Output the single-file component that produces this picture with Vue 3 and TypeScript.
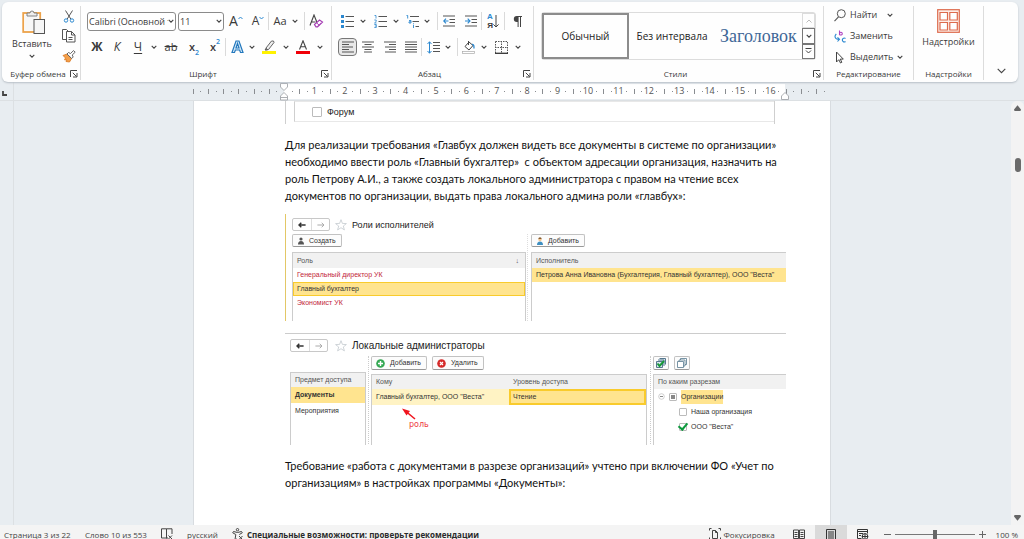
<script setup lang="ts">
import { h, ref } from 'vue'

const Chevron = () =>
  h('svg', { width: 6, height: 6, viewBox: '0 0 6 6', 'aria-hidden': 'true' }, [
    h('path', { d: 'M.7 1.8 3 4.1 5.3 1.8', fill: 'none', stroke: '#444', 'stroke-width': 1.1 }),
  ])

const Launcher = () =>
  h('svg', { width: 8, height: 8, viewBox: '0 0 8 8', 'aria-hidden': 'true' }, [
    h('path', { d: 'M.5 7V.5H7M2.8 2.8 6.5 6.5M7 3v4H3', fill: 'none', stroke: '#444', 'stroke-width': 1 }),
  ])

const Star = () =>
  h('svg', { width: 12, height: 12, viewBox: '0 0 12 12', 'aria-hidden': 'true' }, [
    h('path', {
      d: 'M6 .7 7.4 4.4 11.4 4.6 8.3 7 9.4 10.9 6 8.7 2.6 10.9 3.7 7 .6 4.6 4.6 4.4Z',
      fill: '#fff', stroke: '#bcc3c8', 'stroke-width': 0.7,
    }),
  ])

const Arrow = (props: { back?: boolean }) =>
  h('svg', { width: 8, height: 6, viewBox: '0 0 8 6', 'aria-hidden': 'true' }, [
    h('path', {
      d: props.back ? 'M3.3.8 1 3l2.3 2.2M1 3h6.6' : 'M4.7.8 7 3 4.7 5.2M7 3H.4',
      fill: 'none', stroke: props.back ? '#333' : '#aaa', 'stroke-width': props.back ? 1.5 : 1,
    }),
  ])
Arrow.props = { back: Boolean }

const unit = 30.4
const origin = 91
const numbers = Array.from({ length: 16 }, (_, i) => ({ n: i + 1, x: origin + unit * (i + 1) }))
const halves: number[] = []
const dots: number[] = []
for (let q = -12; q <= 79; q++) {
  const x = Math.round(origin + (unit * q) / 4)
  if (q === 0 || x < 0 || q > 71) continue
  if (q % 2 !== 0) dots.push(x)
  else if (q % 4 !== 0 || q < 0 || q > 64) halves.push(x)
}

const intro = [
  'Для реализации требования «Главбух должен видеть все документы в системе по организации»',
  'необходимо ввести роль «Главный бухгалтер»  с объектом адресации организация, назначить на',
  'роль Петрову А.И., а также создать локального администратора с правом на чтение всех',
  'документов по организации, выдать права локального админа роли «главбух»:',
]
const outro = [
  'Требование «работа с документами в разрезе организаций» учтено при включении ФО «Учет по',
  'организациям» в настройках программы «Документы»:',
]
const roles = ['Генеральный директор УК', 'Главный бухгалтер', 'Экономист УК']
const zoom = ref(50)
</script>

<template>
  <div class="app">
    <header class="ribbon">
      <section class="group clip">
        <div class="body">
          <button class="paste">
            <svg width="24" height="26" viewBox="0 0 24 26">
              <rect x="1.2" y="4" width="17" height="19" fill="#fff" stroke="#eca24a" stroke-width="1.8" />
              <rect x="3" y="5.5" width="13.5" height="16" fill="#f7f7f7" />
              <path d="M5 7V4h3a2 2 0 0 1 4 0h3v3Z" fill="#eee" stroke="#777" stroke-width=".9" />
              <rect x="12" y="10.5" width="10.5" height="14" fill="#f6f6f6" stroke="#555" />
            </svg>
            <span>Вставить</span>
            <Chevron />
          </button>
          <div class="side">
            <button aria-label="Вырезать">
              <svg width="12" height="13" viewBox="0 0 12 13" fill="none">
                <path d="M2.5.5 7.8 9M9.5.5 4.2 9" stroke="#555" />
                <circle cx="3" cy="10.5" r="1.7" stroke="#2b88d0" /><circle cx="9" cy="10.5" r="1.7" stroke="#2b88d0" />
              </svg>
            </button>
            <button aria-label="Копировать">
              <svg width="14" height="14" viewBox="0 0 14 14" fill="#fff" stroke="#555">
                <path d="M4.5 10.5H.5V.5h4l2 2" /><path d="M4.5 2.5h5L13 6v7H4.5ZM9.5 2.5V6H13M6.5 8.5h4M6.5 10.5h4" />
              </svg>
            </button>
            <button aria-label="Формат по образцу">
              <svg width="14" height="13" viewBox="0 0 14 13">
                <path d="M1 5.5 5 4l4.5 4.5L7.5 12 4 11.5 5 10 2.5 9.8 3.5 8Z" fill="#f4a04b" stroke="#d9751c" stroke-width=".8" />
                <path d="m5 4 1.5-1.5 2 1L11.5.6l1.7 1.6L10.2 5l1 2-1.5 1.5Z" fill="#fff" stroke="#555" stroke-width=".9" />
              </svg>
            </button>
          </div>
        </div>
        <footer><span>Буфер обмена</span><button aria-label="Параметры буфера обмена"><Launcher /></button></footer>
      </section>

      <section class="group font">
        <div class="body rows">
          <div class="row">
            <label class="combo name">
              <select aria-label="Шрифт"><option>Calibri (Основной текст)</option></select><Chevron />
            </label>
            <label class="combo size">
              <select aria-label="Размер шрифта"><option>11</option></select><Chevron />
            </label>
            <button class="w24 big" aria-label="Увеличить размер">A<svg width="5" height="10" viewBox="0 0 5 10"><path d="M.5 3 2.5 1l2 2" fill="none" stroke="#2b88d0" /></svg></button>
            <button class="w20 mid" aria-label="Уменьшить размер">A<svg width="5" height="10" viewBox="0 0 5 10"><path d="M.5 1l2 2 2-2" fill="none" stroke="#2b88d0" /></svg></button>
            <i class="sep"></i>
            <button class="w22">Aa</button>
            <button class="w8" aria-label="Варианты регистра"><Chevron /></button>
            <i class="sep gap-before"></i>
            <button class="w22" aria-label="Удалить форматирование">
              <svg width="15" height="14" viewBox="0 0 15 14" fill="none">
                <path d="M1 11.5 5 1l3 7.5M2.5 8h4" stroke="#444" stroke-width="1.1" />
                <path d="m5.5 10.5 5-4.5 3 2-5 4.8H7Z" fill="#fff" stroke="#a63fb5" stroke-width="1.2" /><path d="m7.5 8.8 2.8 2.5" stroke="#a63fb5" />
              </svg>
            </button>
          </div>
          <div class="row">
            <button class="w20 heavy">Ж</button>
            <button class="w20 italic">К</button>
            <button class="w22 under">Ч</button>
            <button class="w10" aria-label="Варианты подчёркивания"><Chevron /></button>
            <button class="w24 strike">ab</button>
            <button class="w22 script">x<sub>2</sub></button>
            <button class="w20 script">x<sup>2</sup></button>
            <i class="sep"></i>
            <button class="w22" aria-label="Текстовые эффекты">
              <svg width="13" height="14" viewBox="0 0 13 14"><path d="M1 12.5 5 1h3l4 11.5H9.5L8.6 10H4.4l-.9 2.5ZM5 8h3L6.5 3.5Z" fill="#d8ebf9" stroke="#2378bd" stroke-width="1.2" /></svg>
            </button>
            <button class="w8" aria-label="Варианты эффектов"><Chevron /></button>
            <button class="w26" aria-label="Цвет выделения">
              <svg width="14" height="14" viewBox="0 0 14 14"><path d="m4 8 5.5-7h2l.5 1.5-5.5 7H4.5Z" fill="#eee" stroke="#555" stroke-width=".9" /><path d="M4.5 8 3 10h2.5" stroke="#555" fill="none" /><rect x="0" y="11" width="14" height="3" fill="#fff200" /></svg>
            </button>
            <button class="w8" aria-label="Варианты выделения"><Chevron /></button>
            <button class="w26" aria-label="Цвет текста">
              <svg width="14" height="14" viewBox="0 0 14 14"><path d="M3.5 9.5 7 .8l3.5 8.7M4.7 6.7h4.6" fill="none" stroke="#444" stroke-width="1.1" /><rect x="0" y="11" width="14" height="3" fill="#f00008" /></svg>
            </button>
            <button class="w8" aria-label="Варианты цвета"><Chevron /></button>
          </div>
        </div>
        <footer><span>Шрифт</span><button aria-label="Параметры шрифта"><Launcher /></button></footer>
      </section>

      <section class="group para">
        <div class="body rows">
          <div class="row">
            <button class="w18" aria-label="Маркеры">
              <svg width="13" height="13" viewBox="0 0 13 13"><path d="M4.5 1.5H13M4.5 6.5H13M4.5 11.5H13" stroke="#555" /><path d="M0 0h3v3H0ZM0 5h3v3H0ZM0 10h3v3H0Z" fill="#2b88d0" /></svg>
            </button>
            <button class="w14" aria-label="Варианты маркеров"><Chevron /></button>
            <button class="w20" aria-label="Нумерация">
              <svg width="13" height="13" viewBox="0 0 13 13" fill="none"><path d="M4.5 1.5H13M4.5 6.5H13M4.5 11.5H13" stroke="#555" /><path d="M.5.5H2v3M.3 5h1.9v1.5L.5 8h2M.3 9.5h2v3h-2M.8 11h1.5" stroke="#2b88d0" stroke-width=".8" /></svg>
            </button>
            <button class="w12" aria-label="Варианты нумерации"><Chevron /></button>
            <button class="w20" aria-label="Многоуровневый список">
              <svg width="13" height="13" viewBox="0 0 13 13" fill="none"><path d="M4 1.5h9M6.5 6.5H13M9.5 11.5H13" stroke="#555" /><path d="M.5.5h1.2v3M3 5.5h2V8H3V6.8h2M7.5 10v3M7.5 8.3v1" stroke="#2b88d0" stroke-width=".9" /></svg>
            </button>
            <button class="w10" aria-label="Варианты списка"><Chevron /></button>
            <i class="sep gap-before"></i>
            <button class="w22" aria-label="Уменьшить отступ">
              <svg width="12" height="12" viewBox="0 0 12 12" fill="none"><path d="M0 1h12M6.5 4.5H12M6.5 7.5H12M0 11h12" stroke="#555" /><path d="M5.5 6H.8M3 3.7.7 6 3 8.3" stroke="#2b88d0" stroke-width="1.1" /></svg>
            </button>
            <button class="w21" aria-label="Увеличить отступ">
              <svg width="12" height="12" viewBox="0 0 12 12" fill="none"><path d="M0 1h12M6.5 4.5H12M6.5 7.5H12M0 11h12" stroke="#555" /><path d="M0 6h4.8M2.7 3.7 5 6 2.7 8.3" stroke="#2b88d0" stroke-width="1.1" /></svg>
            </button>
            <i class="sep"></i>
            <button class="w22 sort" aria-label="Сортировка">
              <span><b>А</b><b>Я</b></span>
              <svg width="6" height="13" viewBox="0 0 6 13"><path d="M3 0v12M.4 9.4 3 12l2.6-2.6" fill="none" stroke="#444" /></svg>
            </button>
            <i class="sep"></i>
            <button class="w24" aria-label="Знаки абзаца">
              <svg width="9" height="11" viewBox="0 0 9 11"><path d="M3.8 0H9v1H8v10H7V1H5.6v10h-1V6H3.8a3 3 0 0 1 0-6Z" fill="#444" /></svg>
            </button>
          </div>
          <div class="row">
            <button class="align active" aria-label="По левому краю">
              <svg width="12" height="12" viewBox="0 0 12 12"><path d="M0 1h12M0 3.5h7M0 6h11M0 8.5h7M0 11h12" stroke="#555" /></svg>
            </button>
            <button class="w22" aria-label="По центру">
              <svg width="12" height="12" viewBox="0 0 12 12"><path d="M0 1h12M2.5 3.5h7M0 6h12M2.5 8.5h7M2 11h8" stroke="#555" /></svg>
            </button>
            <button class="w21" aria-label="По правому краю">
              <svg width="12" height="12" viewBox="0 0 12 12"><path d="M0 1h12M5 3.5h7M1 6h11M5 8.5h7M1 11h11" stroke="#555" /></svg>
            </button>
            <button class="w21" aria-label="По ширине">
              <svg width="12" height="12" viewBox="0 0 12 12"><path d="M0 1h12M0 3.5h12M0 6h12M0 8.5h12M0 11h12" stroke="#555" /></svg>
            </button>
            <i class="sep"></i>
            <button class="w22" aria-label="Интервал">
              <svg width="13" height="13" viewBox="0 0 13 13" fill="none"><path d="M6 1.5h7M6 4.5h7M6 7.5h7M6 10.5h7" stroke="#555" /><path d="M2.5.8v11.4M.5 3l2-2.2 2 2.2M.5 10l2 2.2 2-2.2" stroke="#2b88d0" /></svg>
            </button>
            <button class="w8" aria-label="Варианты интервала"><Chevron /></button>
            <i class="sep gap-before"></i>
            <button class="w22" aria-label="Заливка">
              <svg width="14" height="13" viewBox="0 0 14 13"><path d="m3 5.5 4-4.5 4 3.5L7 9Z" fill="#fff" stroke="#444" /><path d="M6.5 0v4" stroke="#444" /><path d="M10 3.5c2-.5 2 2 2 4" fill="none" stroke="#2b88d0" stroke-width="1.3" /><rect x=".5" y="10.5" width="12" height="2" fill="#fff" stroke="#aaa" stroke-width=".7" /></svg>
            </button>
            <button class="w8" aria-label="Варианты заливки"><Chevron /></button>
            <button class="w26" aria-label="Границы">
              <svg width="13" height="13" viewBox="0 0 13 13" fill="none"><path d="M.5.5h12v12M.5.5v12M6.5 0v12M0 6.5h12" stroke="#555" stroke-dasharray="1.5 1" /><path d="M0 12.3h13" stroke="#333" stroke-width="1.3" /></svg>
            </button>
            <button class="w8" aria-label="Варианты границ"><Chevron /></button>
          </div>
        </div>
        <footer><span>Абзац</span><button aria-label="Параметры абзаца"><Launcher /></button></footer>
      </section>

      <section class="group styles">
        <div class="body">
          <div class="gallery">
            <button class="style chosen">Обычный</button>
            <button class="style plain">Без интервала</button>
            <button class="style heading">Заголовок</button>
            <div class="scroller">
              <button class="dim" aria-label="Вверх"><svg width="6" height="4" viewBox="0 0 6 4"><path d="M.5 3.5 3 1l2.5 2.5" fill="none" stroke="#bbb" /></svg></button>
              <button aria-label="Вниз"><Chevron /></button>
              <button aria-label="Все стили"><svg width="7" height="6" viewBox="0 0 7 6"><path d="M.5.5h6M1 2.5 3.5 5 6 2.5" fill="none" stroke="#444" /></svg></button>
            </div>
          </div>
        </div>
        <footer><span>Стили</span><button aria-label="Параметры стилей"><Launcher /></button></footer>
      </section>

      <section class="group edit">
        <div class="body list">
          <button>
            <svg width="12" height="13" viewBox="0 0 12 13"><circle cx="7.3" cy="4.7" r="4" fill="none" stroke="#555" /><path d="M4.5 7.8.5 12.2" stroke="#555" stroke-width="1.1" /></svg>
            <span class="find">Найти</span><Chevron />
          </button>
          <button>
            <svg width="12" height="13" viewBox="0 0 12 13" fill="none"><path d="M5.5.5V5.3M5.5 3.5a1.4 1.4 0 1 1 0 .3" stroke="#b146c2" stroke-width="1.1" /><path d="M11.5 8.5a1.9 1.9 0 1 0 0 3M2.3 4C.2 6 .5 9.3 5 9.3M3.5 7.3l2 2-2 2.2" stroke="#2b88d0" stroke-width="1.1" /></svg>
            <span>Заменить</span>
          </button>
          <button>
            <svg width="12" height="13" viewBox="0 0 12 13"><path d="M2.5 1v10l2.3-2.3L6.500 12l1.3-.7-1.5-3.2H9.3Z" fill="#fff" stroke="#444" /></svg>
            <span>Выделить</span><Chevron />
          </button>
        </div>
        <footer><span>Редактирование</span></footer>
      </section>

      <section class="group addins">
        <div class="body">
          <button class="addin">
            <svg width="23" height="24" viewBox="0 0 23 24" fill="#fff" stroke="#dd6b4d" stroke-width="1.2"><rect x=".7" y=".7" width="21.6" height="22.6" fill="#fdeee9" /><path d="M3 3.5h7.5V11H3ZM12.8 3.5h7.5V11h-7.5ZM3 13.5h7.5V21H3ZM12.8 13.5h7.5V21h-7.5Z" /></svg>
            <span>Надстройки</span>
          </button>
        </div>
        <footer><span>Надстройки</span></footer>
      </section>
      <button class="collapse" aria-label="Свернуть ленту"><svg width="9" height="6" viewBox="0 0 9 6"><path d="M.7.8 4.5 4.6 8.3.8" fill="none" stroke="#444" stroke-width="1.1" /></svg></button>
    </header>

    <div class="ruler">
      <div class="tab"><svg width="5" height="5" viewBox="0 0 5 5"><path d="M1 0v4h4" fill="none" stroke="#444" stroke-width="1.8" /></svg></div>
      <div class="track">
        <svg width="638" height="19" viewBox="0 0 638 19">
          <rect x="91" y="2" width="501" height="15" fill="#fff" />
          <rect v-for="x in halves" :key="'h' + x" :x="x" y="7" width="1" height="5" fill="#8a8d91" />
          <rect v-for="x in dots" :key="'d' + x" :x="x" y="9" width="1" height="1" fill="#8a8d91" />
          <text v-for="m in numbers" :key="m.n" :x="m.x" y="12" text-anchor="middle">{{ m.n }}</text>
          <g fill="#fff" stroke="#a3a6aa" stroke-width=".9">
            <path d="M87.5 1.5h7V5L91 8.5 87.5 5ZM91 10.5 94.500 14v4h-7v-4ZM87.5 15.5h7" />
            <path d="M592 10.5 595.5 14v3.5h-7V14Z" />
          </g>
        </svg>
      </div>
    </div>

    <main class="workspace">
      <aside class="vruler"></aside>
      <div class="canvas">
        <article class="page">
          <div class="fragment"><label><input type="checkbox" />Форум</label></div>
          <p><span v-for="line in intro" :key="line">{{ line }}</span></p>

          <section class="shot executors">
            <div class="head">
              <div class="nav"><button aria-label="Назад"><Arrow back /></button><button aria-label="Вперёд"><Arrow /></button></div>
              <Star /><h2>Роли исполнителей</h2>
            </div>
            <div class="split">
              <div class="left">
                <button class="cmd"><svg width="8" height="8" viewBox="0 0 8 8"><circle cx="4" cy="2" r="1.6" fill="#555" /><path d="M1 7.5Q1 4 4 4t3 3.5Z" fill="#555" /></svg>Создать</button>
                <div class="panel closed">
                  <table>
                    <thead><tr><th><div>Роль<span>↓</span></div></th></tr></thead>
                    <tbody><tr v-for="(r, i) in roles" :key="r" :class="{ current: i === 1 }"><td>{{ r }}</td></tr></tbody>
                  </table>
                </div>
              </div>
              <div class="right">
                <button class="cmd"><svg width="8" height="8" viewBox="0 0 8 8"><path d="M1 8Q1 4.5 4 4.5T7 8Z" fill="#3e8fc2" /><circle cx="4" cy="2.6" r="1.7" fill="#f0c592" /><path d="M2.3 2Q2.5.3 4 .3T5.7 2Z" fill="#865a2c" /></svg>Добавить</button>
                <div class="panel">
                  <table>
                    <thead><tr><th>Исполнитель</th></tr></thead>
                    <tbody><tr class="marked"><td>Петрова Анна Ивановна (Бухгалтерия, Главный бухгалтер), ООО "Веста"</td></tr></tbody>
                  </table>
                </div>
              </div>
            </div>
          </section>

          <section class="shot admins">
            <div class="head">
              <div class="nav"><button aria-label="Назад"><Arrow back /></button><button aria-label="Вперёд"><Arrow /></button></div>
              <Star /><h2>Локальные администраторы</h2>
            </div>
            <div class="split">
              <div class="subject">
                <div class="panel closed">
                  <table>
                    <thead><tr><th>Предмет доступа</th></tr></thead>
                    <tbody><tr class="marked"><td><b>Документы</b></td></tr><tr><td>Мероприятия</td></tr></tbody>
                  </table>
                </div>
              </div>
              <div class="who">
                <div class="cmds">
                  <button class="cmd"><svg width="9" height="9" viewBox="0 0 9 9"><circle cx="4.5" cy="4.5" r="4.3" fill="#35a853" /><path d="M4.5 2v5M2 4.5h5" stroke="#fff" stroke-width="1.4" /></svg>Добавить</button>
                  <button class="cmd"><svg width="9" height="9" viewBox="0 0 9 9"><circle cx="4.5" cy="4.5" r="4.3" fill="#d52b2b" /><path d="m3 3 3 3M6 3 3 6" stroke="#fff" stroke-width="1.2" /></svg>Удалить</button>
                </div>
                <div class="panel closed">
                  <table>
                    <thead><tr><th>Кому</th><th>Уровень доступа</th></tr></thead>
                    <tbody><tr><td class="pale">Главный бухгалтер, ООО "Веста"</td><td class="cell">Чтение</td></tr></tbody>
                  </table>
                  <div class="note">
                    <svg width="14" height="12" viewBox="0 0 14 12"><path d="M13 11 4 3.5" stroke="#f0141e" stroke-width="1.6" /><path d="M0 .5 8 3 4.5 7.5Z" fill="#f0141e" /></svg>
                    <span>роль</span>
                  </div>
                </div>
              </div>
              <div class="cuts">
                <div class="cmds">
                  <button class="cmd icon" aria-label="Отметить все"><svg width="10" height="10" viewBox="0 0 10 10"><path d="M3.5.5h6v6M2 2h6v6M.5 3.5h6v6h-6Z" fill="#d7e4ec" stroke="#56788e" /><path d="m1.5 5.5 2 2.500L8 3" fill="none" stroke="#159a35" stroke-width="1.9" /></svg></button>
                  <button class="cmd icon" aria-label="Снять отметки"><svg width="10" height="10" viewBox="0 0 10 10"><path d="M3.5.5h6v6h-6Z" fill="#fff" stroke="#56788e" stroke-width=".8" /><path d="M2 2h6v6H2Z" fill="#fff" stroke="#56788e" stroke-width=".8" /><path d="M.5 3.5h6v6h-6Z" fill="#fff" stroke="#56788e" stroke-width=".8" /></svg></button>
                </div>
                <div class="panel">
                  <div class="cap">По каким разрезам</div>
                  <div class="node"><svg width="7" height="7" viewBox="0 0 7 7"><circle cx="3.5" cy="3.5" r="2.8" fill="#fff" stroke="#bbb" stroke-width=".7" /><path d="M2 3.5h3" stroke="#888" /></svg><label><input class="part" type="checkbox" /><mark>Организации</mark></label></div>
                  <div class="node child"><label><input type="checkbox" />Наша организация</label></div>
                  <div class="node child"><label><input type="checkbox" checked />ООО "Веста"</label></div>
                </div>
              </div>
            </div>
          </section>
          <p class="last"><span v-for="line in outro" :key="line">{{ line }}</span></p>
        </article>
      </div>
      <div class="scrollbar">
        <svg width="7" height="6" viewBox="0 0 7 6"><path d="M3.5.3 7 4.5 6.5 6h-6L0 4.5Z" fill="#666" /></svg>
        <i></i>
        <svg class="down" width="7" height="6" viewBox="0 0 7 6"><path d="M3.5 5.7 7 1.5 6.5 0h-6L0 1.5Z" fill="#666" /></svg>
      </div>
    </main>

    <footer class="status">
      <span class="pages">Страница 3 из 22</span>
      <span class="words">Слово 10 из 553</span>
      <svg class="proof" width="12" height="12" viewBox="0 0 12 12" fill="none" stroke="#444"><path d="M5.5 10H.5V.8h5v9.7M5.5.8H11V6M5.5 10h1.5M7.5 7.5l3.5 3.5M11 7.5 7.5 11" /></svg>
      <span class="lang">русский</span>
      <svg width="12" height="12" viewBox="0 0 12 12" fill="none" stroke="#444"><circle cx="5.5" cy="1.7" r="1.2" /><path d="M5 11 3 11.5 3.8 6.5.7 4.8 1.5 3.5l4 1 4-1 .8 1.3-3 1.7M7 8l3.5 3.5M10.5 8 7 11.5" /></svg>
      <b>Специальные возможности: проверьте рекомендации</b>
      <button class="focus"><svg width="12" height="12" viewBox="0 0 12 12" fill="none" stroke="#444"><path d="M2.5.5h-2v2M9.5.5h2v2M.5 9.5v2h2M11.5 9.5v2h-2M3.5 2.5h3l2 2v6h-5ZM6.5 2.5v2h2" /></svg>Фокусировка</button>
      <button class="view" aria-label="Режим чтения"><svg width="12" height="11" viewBox="0 0 12 11" fill="none" stroke="#444"><path d="M.5 1h5v8.5h-5ZM6.5 1h5v8.5h-5ZM1.5 3.5h3M1.5 5.5h3M1.5 7.5h3M7.5 3.5h3M7.5 5.5h3M7.5 7.5h3M6 1v10" /></svg></button>
      <button class="view on" aria-label="Разметка страницы"><svg width="10" height="11" viewBox="0 0 10 11" fill="none" stroke="#333"><path d="M.5.5h9v10h-9ZM2 3h6M2 5h6M2 7h6M2 9h6" /></svg></button>
      <button class="view" aria-label="Веб-документ"><svg width="12" height="11" viewBox="0 0 12 11" fill="none" stroke="#333"><path d="M4.5 9.5h-4v-9h10v4M.5 2.5h10M2 4.5h4M2 6.5h2" /><circle cx="8" cy="7.5" r="2.9" /><path d="M5 7.5h6M8 4.5v6" /></svg></button>
      <button class="step" aria-label="Уменьшить"><svg width="7" height="7" viewBox="0 0 7 7"><path d="M0 3.5h7" stroke="#666" /></svg></button>
      <input v-model="zoom" type="range" min="0" max="100" aria-label="Масштаб" />
      <button class="step" aria-label="Увеличить"><svg width="7" height="7" viewBox="0 0 7 7"><path d="M0 3.5h7M3.5 0v7" stroke="#666" /></svg></button>
      <span class="percent">100 %</span>
    </footer>
  </div>
</template>

<style>
body { margin: 0; overflow: hidden; }
</style>

<style scoped>
* { box-sizing: border-box; }
.app { height: 100vh; display: flex; flex-direction: column; background: #e8edf1; color: #3a3a3a; font: 9px/12px "Open Sans", "Noto Sans", sans-serif; }
button { border: 0; padding: 0; margin: 0; background: none; color: inherit; font: inherit; white-space: nowrap; }
svg { display: block; flex: none; }

.ribbon { display: flex; flex: none; height: 80px; margin: 2px 6px 0 2px; padding: 4px 0 2px; background: #fefefe; border-radius: 6px; box-shadow: 0 1px 2px #b8bfc6; position: relative; z-index: 1; }
.group { display: flex; flex-direction: column; border-right: 1px solid #dcdcdc; flex: none; }
.body { flex: 1; display: flex; min-height: 0; }
.group > footer { display: flex; align-items: center; height: 12px; padding: 0 2px 0 4px; font-size: 8px; }
.group > footer span { flex: 1; text-align: center; white-space: nowrap; }
.clip { width: 79px; }
.font { width: 251px; }
.para { width: 202px; }
.styles { flex: 1; min-width: 0; }
.edit { width: 90px; }
.addins { width: 70px; }

.paste { width: 60px; display: flex; flex-direction: column; align-items: center; padding-top: 3px; gap: 3px; font-size: 9px; }
.paste svg:first-child { margin-left: 4px; }
.side { display: flex; flex-direction: column; gap: 6px; padding: 3px 0 0; align-items: center; }
.side button { height: 14px; }

.rows { flex-direction: column; padding: 6px 0 0 6px; gap: 8px; }
.row { display: flex; align-items: center; height: 18px; }
.row button { height: 18px; display: flex; align-items: center; justify-content: center; font-size: 11px; }
.combo { display: flex; align-items: center; height: 19px; border: 1px solid #8b8b8b; border-radius: 3px; padding-right: 1px; background: #fff; }
.combo select { appearance: none; border: 0; background: none; flex: 1; min-width: 0; padding: 0 0 0 1px; font: 9px "Open Sans", sans-serif; color: #3a3a3a; outline: 0; }
.name { width: 89px; margin-right: 2px; }
.size { width: 46px; }
.w8 { width: 8px; } .w10 { width: 10px; } .w12 { width: 12px; } .w14 { width: 14px; } .w18 { width: 18px; }
.w20 { width: 20px; } .w21 { width: 21px; } .w22 { width: 22px; } .w24 { width: 24px; } .w26 { width: 26px; }
.sep { width: 1px; height: 18px; background: #dadada; }
.gap-before { margin-left: 5px; }
.row .big { font-size: 14px; }
.row .mid { font-size: 12px; }
.row .heavy { font-weight: 700; font-size: 12px; }
.row .italic { font-style: italic; font-size: 12px; }
.row .under { text-decoration: underline; font-size: 12px; text-underline-offset: 2px; }
.row .strike { text-decoration: line-through; }
.row .script { font-weight: 600; }
.script sub, .script sup { font-size: 7px; line-height: 7px; color: #2b88d0; }
.script sub { align-self: flex-end; }
.script sup { align-self: flex-start; }
.sort span { display: flex; flex-direction: column; }
.sort b { font: bold 8px/9px "Liberation Sans", Arial, sans-serif; }
.sort b:first-child { color: #2b88d0; }
.align { width: 19px; }
.active { background: #e8e8e8; border: 1px solid #777; border-radius: 4px; }

.styles .body { padding: 6px 7px 0 7px; align-items: flex-start; }
.gallery { flex: 1; min-width: 0; display: flex; height: 48px; border: 1px solid #dcdcdc; border-radius: 3px; align-items: stretch; }
.style { font-size: 10px; color: #222; }
.chosen { width: 87px; border: 2px solid #8c8c8c; flex: none; }
.plain { width: 86px; flex: none; }
.heading { flex: 1; min-width: 0; overflow: hidden; text-align: left; color: #3f6797; margin: 0 4px 0 5px; font: 18px "Liberation Serif", serif; }
.scroller { width: 13px; display: flex; flex-direction: column; }
.scroller button { flex: 1; border: 1px solid #777; display: flex; align-items: center; justify-content: center; }
.scroller .dim { border-color: #dcdcdc; }

.list { flex-direction: column; padding: 2px 0 0 10px; gap: 7px; }
.list button { display: flex; align-items: center; gap: 4px; height: 14px; font-size: 9px; }
.find { margin-right: 6px; }
.addin { flex: 1; display: flex; flex-direction: column; align-items: center; padding-top: 3px; gap: 3px; font-size: 9px; }
.addins > footer, .edit > footer { padding: 0; }
.collapse { width: 34px; display: flex; flex: none; justify-content: center; align-items: flex-end; padding-bottom: 6px; }

.ruler { display: flex; flex: none; height: 19px; border-bottom: 1px solid #dce0e3; padding-right: 14px; }
.tab { width: 14px; padding: 9px 0 0 2px; border-right: 1px solid #dce0e3; }
.track { flex: 1; display: flex; justify-content: center; }
.track text { font: 9px "Open Sans", sans-serif; fill: #555; }

.workspace { flex: 1; min-height: 0; display: flex; }
.vruler { width: 14px; border-right: 1px solid #dce0e3; }
.canvas { flex: 1; display: flex; justify-content: center; overflow: hidden; padding-right: 1px; }
.page { width: 638px; background: #fff; border: solid #d8dce0; border-width: 0 1px; padding: 0 44px 0 91px; color: #1c1c1c; }
.fragment { width: 490px; height: 23px; border: solid #cfcfcf; border-width: 0 1px; display: flex; padding-left: 8px; font: 9px/12px "Liberation Sans", Arial, sans-serif; }
.fragment label { flex: 1; height: 21px; display: flex; align-items: center; gap: 5px; border: solid #e8e8e8; border-width: 1px 0; border-left: 1px solid #cfcfcf; padding-left: 17px; }
.page p { margin: 12px 0 10px; font: 11px/17px Lato, "Open Sans", "Noto Sans", sans-serif; color: #111; }
.page p span { display: block; white-space: pre; }

.shot { font: 7px/10px "Liberation Sans", Arial, sans-serif; color: #333; overflow: hidden; }
.head { display: flex; align-items: center; }
.head h2 { margin: 0 0 0 5px; font-weight: 400; color: #222; white-space: nowrap; }
.nav { display: flex; border: 1px solid #c8c8c8; border-radius: 2px; height: 13px; margin-right: 5px; }
.nav button { width: 18px; display: flex; align-items: center; justify-content: center; }
.nav button + button { border-left: 1px solid #ddd; }
.split { display: flex; }
.cmd { display: flex; align-items: center; gap: 5px; height: 13px; padding: 0 5px 0 4px; border: 1px solid #c2c2c2; border-bottom-color: #999; border-radius: 2px; background: #fcfcfc; }
.cmds { display: flex; gap: 5px; }
.icon { width: 16px; padding: 0 2px; justify-content: center; }
.left, .right, .subject, .who, .cuts { display: flex; flex-direction: column; align-items: flex-start; }
.panel { flex: 1; align-self: stretch; border: solid #ccc; border-width: 1px 0 0 1px; }
.closed { border-right-width: 1px; }
table { border-collapse: collapse; width: 100%; table-layout: fixed; }
th, td { padding: 0 4px; text-align: left; font-weight: 400; white-space: nowrap; }
th { background: #f1f1f1; color: #555; height: 14px; }
th div { display: flex; justify-content: space-between; padding-right: 2px; }
.marked td { background: #ffe48f; }

.executors { height: 107px; border-left: 1px solid #e3c766; padding: 4px 0 0 6px; }
.executors h2 { font-size: 9px; }
.executors .split { padding-top: 3px; height: 90px; }
.executors .cmd { gap: 4px; }
.left { width: 236px; border-right: 1px dotted #ddd; padding-right: 1px; margin-right: 3px; gap: 5px; }
.right { flex: 1; gap: 5px; }
.executors th { height: 15px; }
.executors td { height: 14px; }
.left td { color: #c2273a; }
.left .current td { background: #ffe48f; color: #333; outline: 1px solid #f9cb2c; outline-offset: -1px; }

.admins { margin-top: 12px; height: 112px; border-top: 1px solid #ccc; padding: 5px 0 0 5px; }
.admins .nav { margin-right: 7px; }
.admins h2 { font-size: 10px; }
.admins .split { padding-top: 4px; height: 94px; }
.subject { width: 79px; padding: 16px 2px 0 0; border-right: 1px dotted #ccc; flex: none; }
.who { width: 282px; padding: 0 3px 0 2px; border-right: 1px dotted #ccc; gap: 4px; flex: none; }
.cuts { flex: 1; padding-left: 2px; gap: 4px; }
.admins .cmd { height: 14px; }
.admins td { height: 16px; }
.pale { background: #fff3c4; }
.cell { background: #ffe48f; outline: 2px solid #f9cb2c; outline-offset: -2px; }
.note { display: flex; flex-direction: column; padding: 3px 0 0 30px; }
.note span { padding-left: 7px; font: 8px/9px "DejaVu Sans", sans-serif; color: #ee3a40; }
.cap { height: 14px; line-height: 14px; padding-left: 4px; background: #f1f1f1; color: #555; }
.node { display: flex; align-items: center; height: 15px; gap: 4px; padding-left: 4px; }
.child { padding-left: 25px; }
.node label { display: flex; align-items: center; gap: 4px; }
mark { background: #ffe48f; color: #333; line-height: 14px; }
input[type="checkbox"] { appearance: none; margin: 0; width: 8px; height: 8px; border: 1px solid #bbb; border-radius: 1px; background: #fff; display: flex; align-items: center; justify-content: center; }
.fragment input { width: 10px; height: 10px; }
.part::after { content: ""; width: 4px; height: 4px; background: #888; }
input[type="checkbox"]:checked::after { content: ""; flex: none; width: 4px; height: 7px; margin-bottom: 3px; border: solid #0c9a3d; border-width: 0 2px 2px 0; rotate: 40deg; }
.page p.last { margin-top: 12px; }

.scrollbar { width: 13px; background: #f3f3f3; border-radius: 6px 6px 0 0; display: flex; flex-direction: column; align-items: center; padding: 4px 0; }
.scrollbar i { width: 6px; height: 14px; border-radius: 3px; background: #6b6b6b; margin-top: 47px; }
.down { margin-top: auto; }

.status { flex: none; height: 14px; overflow: hidden; display: flex; align-items: flex-start; padding: 3px 6px 0 4px; background: #f4f4f4; font-size: 8px; white-space: nowrap; color: #444; line-height: 14px; }
.pages { width: 81px; }
.words { width: 76px; }
.proof { margin-right: 14px; }
.lang { width: 45px; }
.status b { margin-left: 3px; color: #2b2b2b; }
.focus { display: flex; gap: 2px; margin-left: auto; margin-right: 8px; }
.view { width: 32px; height: 14px; margin-top: -3px; padding-top: 4px; display: flex; justify-content: center; }
.on { background: #dadada; }
.step { padding: 3px 0 0; }
.view + .step { margin-left: 5px; }
.status input { appearance: none; width: 80px; height: 13px; margin: 0 4px; background: linear-gradient(#777, #777) center / 100% 1px no-repeat; }
.status input::-webkit-slider-thumb { appearance: none; width: 4px; height: 10px; background: #666; }
.percent { margin-left: 10px; }
</style>
